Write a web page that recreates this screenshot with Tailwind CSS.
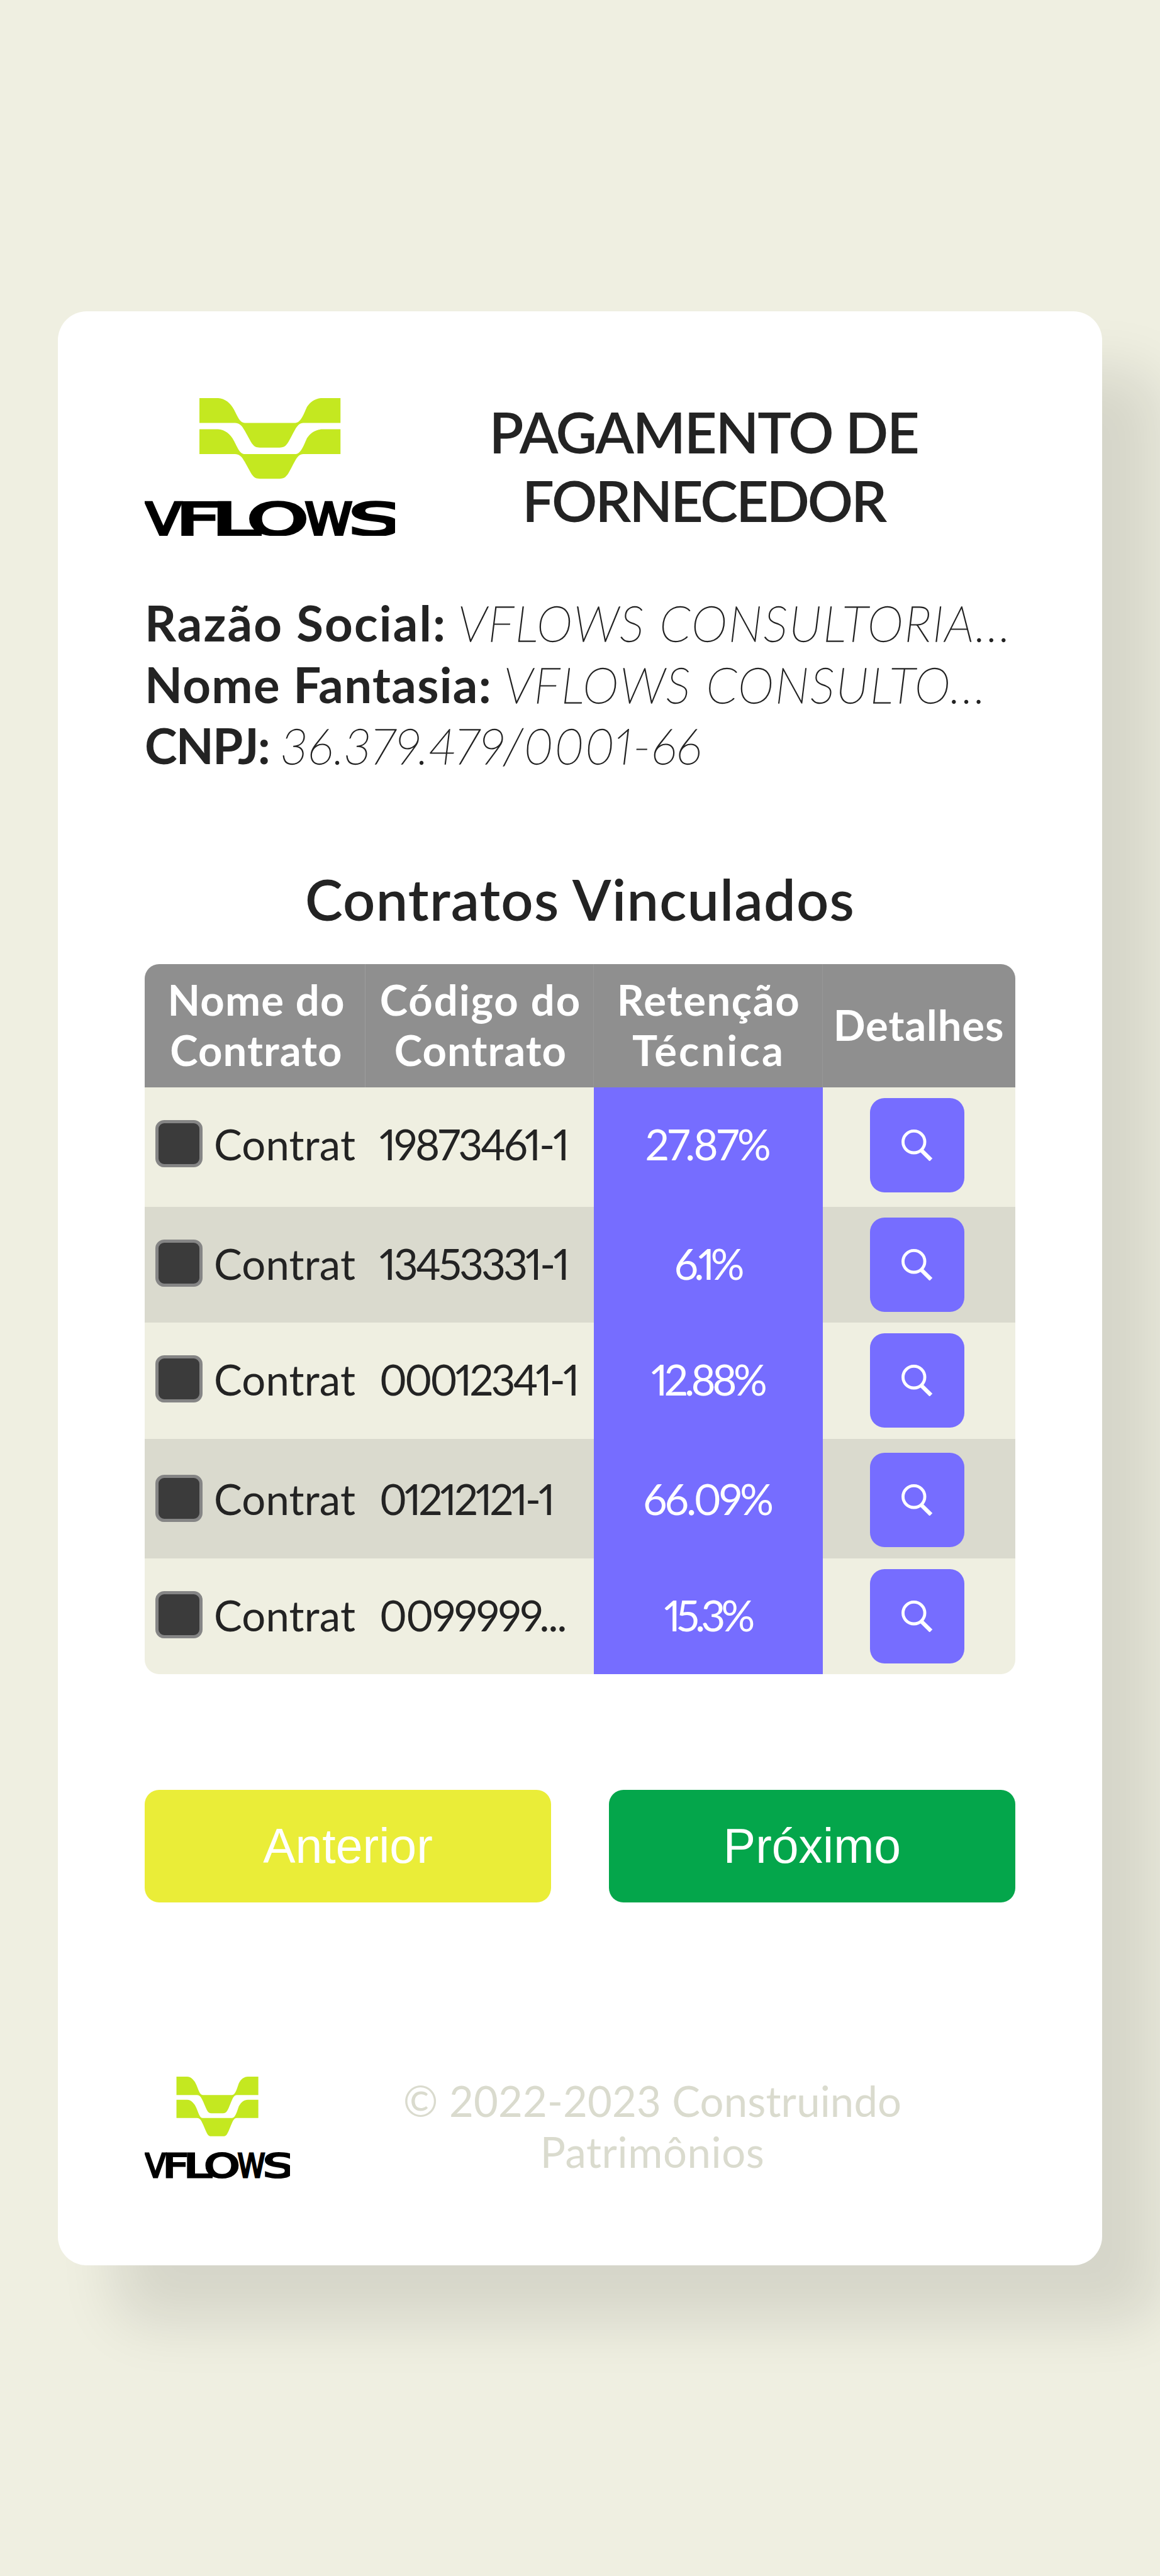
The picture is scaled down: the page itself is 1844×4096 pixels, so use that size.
<!DOCTYPE html>
<html lang="pt-BR">
<head>
<meta charset="utf-8">
<title>Pagamento de Fornecedor</title>
<script src="https://cdn.jsdelivr.net/npm/@tailwindcss/browser@4"></script>
</head>
<body class="h-[4096px] overflow-hidden bg-[#efefe1] pt-[495px] font-['Lato',sans-serif] text-[#232323]">
<svg class="hidden" xmlns="http://www.w3.org/2000/svg">
  <symbol id="logo" viewBox="50 71 1381 760" preserveAspectRatio="none">
    <g fill="#c4e820">
      <path id="band" d="M352 71H455C490 71 525 100 541 132C560 165 572 208 603 208H880C910 208 925 165 945 120C965 90 995 71 1030 71H1130V208H925C905 208 895 222 884 237C865 270 845 315 832 328C825 338 812 344 795 344H685C665 344 655 338 647 328C632 310 615 270 595 240C585 222 570 208 548 208H352Z"/>
      <use href="#band" y="172"/>
    </g>
    <g fill="#000" stroke="#000" stroke-width="15" font-family="DejaVu Sans" font-weight="400" font-size="241">
      <text x="55" y="823" textLength="196" lengthAdjust="spacingAndGlyphs">V</text>
      <text x="224" y="823" textLength="240" lengthAdjust="spacingAndGlyphs">F</text>
      <text x="420" y="823" textLength="263" lengthAdjust="spacingAndGlyphs">L</text>
      <text x="616" y="823" textLength="337" lengthAdjust="spacingAndGlyphs">O</text>
      <text x="934" y="823" textLength="261" lengthAdjust="spacingAndGlyphs">W</text>
      <text x="1176" y="823" textLength="294" lengthAdjust="spacingAndGlyphs">S</text>
    </g>
  </symbol>
  <symbol id="lens" viewBox="0 0 50 50">
    <circle cx="19.8" cy="19.7" r="17.3" fill="none" stroke="#fff" stroke-width="4.8"/>
    <path d="M31 32.5L47 48.3" stroke="#fff" stroke-width="6.4"/>
  </symbol>
</svg>

<main class="mx-[92px] h-[3107px] rounded-[46px] bg-white p-[138px] shadow-[92px_92px_92px_rgba(0,0,0,0.105)]">
  <header class="flex h-[219px]">
    <svg class="h-[219px] w-[398px] shrink-0 overflow-visible"><use href="#logo" width="398" height="219"/></svg>
    <h1 class="-mt-[1px] w-[981px] text-center text-[90px] leading-[109px] font-semibold"><span class="tracking-[-2.2px]">PAGAMENTO DE</span><br><span class="tracking-[-3.2px]">FORNECEDOR</span></h1>
  </header>

  <section class="mt-[90px] text-[78px] leading-[97.5px] whitespace-nowrap">
    <p class="flex"><b class="w-[498px] tracking-[2.15px]">Razão Social:</b><i class="font-thin tracking-[1.95px] [-webkit-text-stroke:1.3px_#232323]">VFLOWS CONSULTORIA...</i></p>
    <p class="flex"><b class="w-[571px] tracking-[1.3px]">Nome Fantasia:</b><i class="font-thin tracking-[2.1px] [-webkit-text-stroke:1.3px_#232323]">VFLOWS CONSULTO...</i></p>
    <p class="flex"><b class="w-[217px] tracking-[-1.9px]">CNPJ:</b><i class="font-thin tracking-[1.7px] proportional-nums [-webkit-text-stroke:1.3px_#232323]">36.379.479/0001-66</i></p>
  </section>

  <h2 class="mt-[140px] text-center text-[90px] leading-[108px] font-semibold tracking-[1.25px]">Contratos Vinculados</h2>

  <section class="mt-[50px] overflow-hidden rounded-[23px] text-[67px] leading-[80px] whitespace-nowrap">
    <div class="grid h-[196px] grid-cols-[351px_363px_364px_305px] bg-[#8f8f8f] text-center font-bold text-white *:pt-[16px]">
      <div class="border-r border-[#9c9c9c] pl-[5px]"><span class="tracking-[1.2px]">Nome do</span><br><span class="tracking-[1.1px]">Contrato</span></div>
      <div class="border-r border-[#979797] pl-[4px]"><span class="tracking-[1.9px]">Código do</span><br><span class="tracking-[1.1px]">Contrato</span></div>
      <div class="border-r border-[#979797] pl-[2px]"><span class="tracking-[1.5px]">Retenção</span><br><span class="tracking-[3.1px]">Técnica</span></div>
      <div class="tracking-[0.9px]"><p class="mt-[40px]">Detalhes</p></div>
    </div>
    <div id="rows"></div>
  </section>

  <div class="mt-[184px] grid grid-cols-2 gap-[92px] font-['Liberation_Sans',sans-serif] text-[77px] text-white">
    <button class="h-[179px] rounded-[23px] bg-[#eaed38] pt-[1px]">Anterior</button>
    <button class="h-[179px] rounded-[23px] bg-[#04a64b] pt-[1px]">Próximo</button>
  </div>

  <footer class="mt-[277px] flex h-[162px]">
    <svg class="h-[162px] w-[231px] shrink-0 overflow-visible"><use href="#logo" width="231" height="162"/></svg>
    <p class="-mt-[2px] w-[1152px] text-center text-[67px] leading-[81px] text-[#dadbce]"><span class="tracking-[0.15px]">© 2022-2023 Construindo</span><br><span class="tracking-[0.6px]">Patrimônios</span></p>
  </footer>
</main>

<script>
// contract code, its tracking, retention, its tracking
const rows = [
  ['19873461-1', 'tracking-[-3.1px]', '27.87%', 'tracking-[-2.6px]'],
  ['13453331-1', 'tracking-[-3.6px]', '6.1%', 'tracking-[-6.5px]'],
  ['00012341-1', 'tracking-[-3.8px]', '12.88%', 'tracking-[-5.6px]'],
  ['01212121-1', 'tracking-[-4px]', '66.09%', 'tracking-[-3.6px]'],
  ['0099999...', 'tracking-[-1.8px]', '15.3%', 'tracking-[-6.6px]'],
];
document.getElementById('rows').innerHTML = rows.map(([code, codeTrack, pct, pctTrack], i) => `
  <div class="grid grid-cols-[351px_363px_364px_305px] proportional-nums ${i % 2 ? 'bg-[#dadace]' : 'bg-[#efefe1]'} ${i === 0 ? 'h-[190px]' : i === 3 ? 'h-[190px] *:pt-[5.5px]' : 'h-[184.5px]'}">
    <div class="flex px-[17px]"><span class="mt-[52px] mr-[18px] size-[75px] shrink-0 rounded-[14px] border-[5px] border-[#858585] bg-[#3b3b3b]"></span><span class="mt-[50px] h-[80px] overflow-hidden tracking-[0.2px]">Contrat</span></div>
    <div class="pl-[22px]"><div class="mt-[50px] ${codeTrack}">${code}</div></div>
    <div class="bg-[#766dff] pr-[3px] text-center text-white"><div class="mt-[50px] ${pctTrack}">${pct}</div></div>
    <div class="pl-[75px]"><button class="mt-[17px] flex size-[150px] items-center justify-center rounded-[23px] bg-[#766dff]"><svg class="size-[50px]"><use href="#lens" width="50" height="50"/></svg></button></div>
  </div>`).join('');
</script>
</body>
</html>
